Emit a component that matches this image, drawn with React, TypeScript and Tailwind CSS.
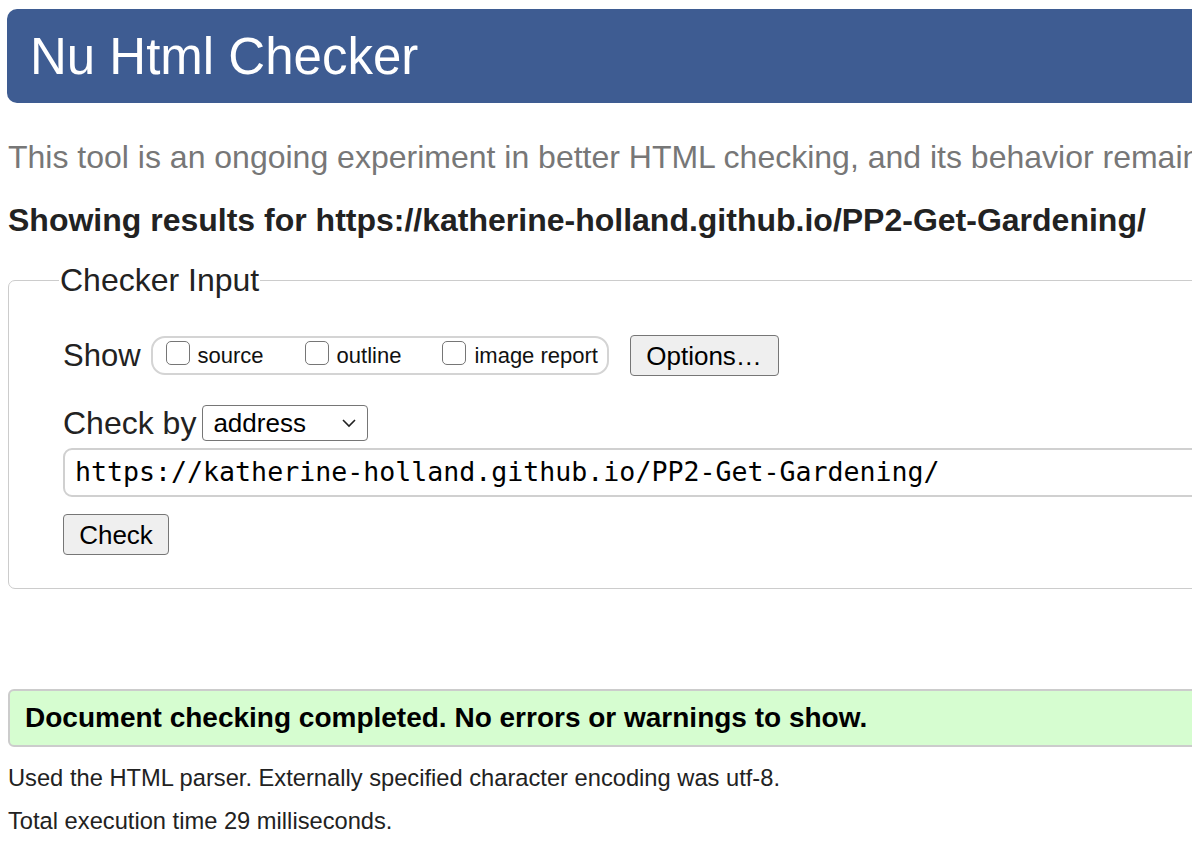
import React from 'react';

const sans = "font-['Liberation_Sans',Arial,Helvetica,sans-serif]";

const Box: React.FC<{ label: string }> = ({ label }) => (
  <label className="flex items-center">
    <span className="w-[24px] h-[24px] rounded-[5px] border-[1.5px] border-[#767676] bg-white mb-[6px]"></span>
    <span className="ml-[8px] text-[22px] leading-none text-[#111]">{label}</span>
  </label>
);

const App: React.FC = () => {
  return (
    <div className={`w-full min-h-screen overflow-hidden bg-white ${sans}`}>
      <div className="w-[1400px] pt-[9px]">
        {/* Header */}
        <div className="ml-[7px] h-[94px] rounded-l-[10px] bg-[#3e5c92] flex items-center pl-[23px]">
          <h1 className="text-[51px] leading-none text-white font-normal">Nu Html Checker</h1>
        </div>

        <p className="ml-[8px] mt-[36px] text-[32px] leading-[36px] text-[#777] whitespace-nowrap">
          This tool is an ongoing experiment in better HTML checking, and its behavior remains
        </p>

        <p className="ml-[8px] mt-[27px] text-[32px] leading-[36px] font-bold text-[#222] whitespace-nowrap">
          Showing results for https://katherine-holland.github.io/PP2-Get-Gardening/
        </p>

        {/* Checker Input */}
        <fieldset className="ml-[8px] mt-[24px] border border-[#ccc] rounded-l-[7px] pb-[33px]">
          <legend className="ml-[50px] px-[1px] text-[32px] leading-[36px] text-[#222]">Checker Input</legend>

          <div className="pl-[54px]">
            <div className="mt-[37px] flex items-center h-[41px]">
              <span className="text-[31px] leading-none text-[#222] mr-[10px]">Show</span>
              <div className="flex items-center h-[39px] w-[458px] rounded-[14px] border-2 border-[#d4d4d4] pl-[13px] gap-[41px]">
                <Box label="source" />
                <Box label="outline" />
                <Box label="image report" />
              </div>
              <button className="ml-[21px] h-[41px] w-[149px] rounded-[4px] border border-[#767676] bg-[#efefef] text-[26px] leading-none text-black">
                Options…
              </button>
            </div>

            <div className="mt-[29px] flex items-center h-[36px]">
              <span className="text-[32px] leading-none text-[#222] mr-[6px]">Check by</span>
              <div className="h-[36px] w-[166px] rounded-[4px] border border-[#767676] bg-white flex items-center pl-[10px] pr-[10px] justify-between">
                <span className="text-[26px] leading-none text-black">address</span>
                <svg width="16" height="10" viewBox="0 0 16 10" fill="none" stroke="#222" strokeWidth="1.6">
                  <path d="M2 2l6 6 6-6" />
                </svg>
              </div>
            </div>

            <div className="mt-[7px] h-[49px] rounded-[9px] border-2 border-[#d0d0d0] flex items-center pl-[10px]">
              <span className="font-['DejaVu_Sans_Mono',monospace] text-[26.6px] leading-none text-black whitespace-nowrap">
                https://katherine-holland.github.io/PP2-Get-Gardening/
              </span>
            </div>

            <button className="mt-[17px] h-[41px] w-[106px] rounded-[4px] border border-[#767676] bg-[#efefef] text-[26px] leading-none text-black">
              Check
            </button>
          </div>
        </fieldset>

        {/* Result */}
        <div className="ml-[8px] mt-[100px] h-[58px] rounded-l-[6px] border-2 border-[#ccc] bg-[#d6fdd0] flex items-center pl-[15px]">
          <span className="text-[28px] leading-none font-bold text-black">
            Document checking completed. No errors or warnings to show.
          </span>
        </div>

        <p className="ml-[8px] mt-[17px] text-[23.7px] leading-[28px] text-[#222]">
          Used the HTML parser. Externally specified character encoding was utf-8.
        </p>
        <p className="ml-[8px] mt-[15px] text-[23.7px] leading-[28px] text-[#222]">
          Total execution time 29 milliseconds.
        </p>
      </div>
    </div>
  );
};

export default App;
